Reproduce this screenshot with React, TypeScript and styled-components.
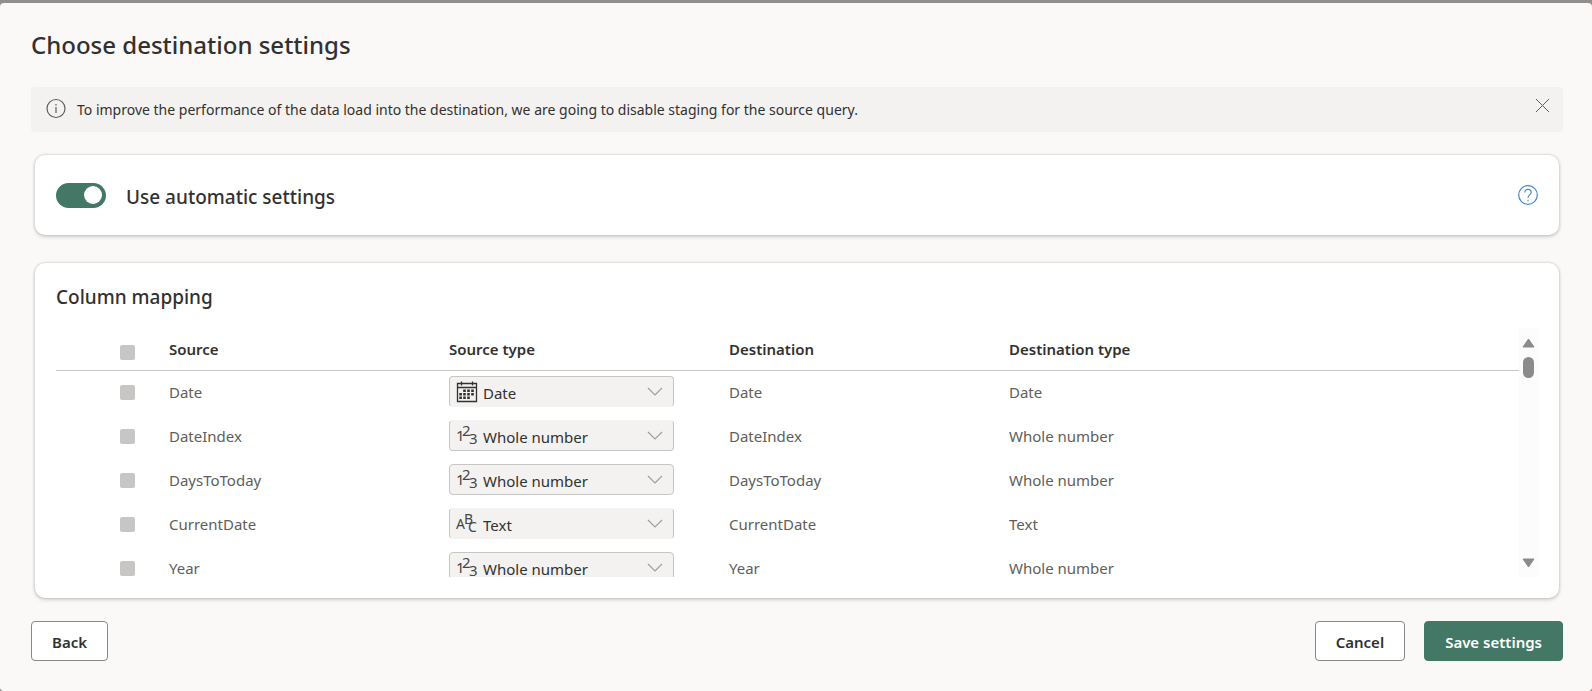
import React, { useState } from "react";
import styled, { createGlobalStyle, css } from "styled-components";

const GlobalStyle = createGlobalStyle`
  *, *::before, *::after { box-sizing: border-box; }
  body {
    margin: 0;
    background: #918e8b;
    color: #323130;
    font-family: "Segoe UI", "Noto Sans", "Open Sans", sans-serif;
    font-size: 15px;
    line-height: 20px;
  }
  button, select, input { font: inherit; color: inherit; }
`;

const Page = styled.div`
  min-height: 100vh;
  padding-top: 3px;
  display: flex;
`;

const Dialog = styled.main`
  flex: 1;
  min-width: 0;
  display: flex;
  flex-direction: column;
  padding: 26px 29px 30px 31px;
  background: #faf9f8;
  border-radius: 4px;
`;

const Title = styled.h1`
  margin: 0;
  font-size: 24px;
  line-height: 32px;
  font-weight: 500;
`;

const MessageBar = styled.div`
  display: flex;
  align-items: flex-start;
  gap: 11px;
  margin-top: 26px;
  min-height: 45px;
  padding: 11px 13px 11px 15px;
  background: #f3f2f1;
  border-radius: 4px;
`;

const MessageText = styled.p`
  flex: 1;
  margin: 0;
  font-size: 14px;
  line-height: 23px;
`;

const IconButton = styled.button`
  display: flex;
  padding: 0;
  border: 0;
  background: none;
  cursor: pointer;
`;

const Card = styled.section`
  margin: 0 4px;
  padding: 0 21px;
  background: #fff;
  border-radius: 10px;
  box-shadow: 0 0 3px rgba(0, 0, 0, 0.22), 0 2px 4px rgba(0, 0, 0, 0.14);
`;

const AutoCard = styled(Card)`
  display: flex;
  align-items: center;
  gap: 20px;
  height: 80px;
  margin-top: 23px;
`;

const MappingCard = styled(Card)`
  margin-top: 28px;
  padding-top: 20px;
  padding-bottom: 21px;
`;

const Toggle = styled.input`
  appearance: none;
  display: flex;
  align-items: center;
  width: 50px;
  height: 25px;
  margin: 0;
  padding: 0 4px;
  border-radius: 13px;
  background: #437866;
  cursor: pointer;

  &::before {
    content: "";
    width: 18px;
    height: 18px;
    border-radius: 50%;
    background: #fff;
  }
  &:checked::before { margin-left: auto; }
  &:not(:checked) { background: #8a8886; }
`;

const ToggleLabel = styled.label`
  flex: 1;
  padding-top: 4px;
  font-size: 19px;
  line-height: 28px;
  font-weight: 500;
`;

const SectionTitle = styled.h2`
  margin: 0 0 17px;
  font-size: 19px;
  line-height: 28px;
  font-weight: 500;
`;

const ScrollFrame = styled.div`
  display: flex;
  height: 249px;
`;

const ScrollBody = styled.div`
  flex: 1;
  min-width: 0;
  overflow: hidden;
`;

const ScrollTrack = styled.div`
  display: flex;
  flex-direction: column;
  align-items: center;
  gap: 9px;
  width: 19px;
  padding: 10px 0 9px;
  background: #fcfcfc;
`;

const ScrollThumb = styled.div`
  width: 11px;
  height: 21px;
  margin-bottom: auto;
  border-radius: 6px;
  background: #8b8b8b;
`;

const Table = styled.table`
  width: 100%;
  table-layout: fixed;
  border-collapse: collapse;
`;

const Col = styled.col<{ $width?: number }>`
  ${(p) => p.$width && css`width: ${p.$width}px;`}
`;

const HeadCell = styled.th`
  height: 42px;
  padding: 0;
  border-bottom: 1px solid #c8c6c4;
  text-align: left;
  font-weight: 600;
  vertical-align: middle;
`;

const Cell = styled.td`
  height: 44px;
  padding: 0 0 1px;
  color: #605e5c;
  vertical-align: middle;
`;

const Tick = styled.input<{ $head?: boolean }>`
  appearance: none;
  display: block;
  width: 15px;
  height: 15px;
  margin: ${(p) => (p.$head ? 8 : 2)}px 0 0 64px;
  border-radius: 2px;
  background: #c8c6c4;
`;

const Picker = styled.div`
  position: relative;
  width: 225px;
  height: 31px;
`;

const PickerSelect = styled.select<{ $top: boolean; $bottom: boolean }>`
  appearance: none;
  width: 100%;
  height: 100%;
  padding: 2px 30px 0 33px;
  border: 1px solid #c8c6c4;
  ${(p) => !p.$top && css`border-top-color: #f3f2f1;`}
  ${(p) => !p.$bottom && css`border-bottom-color: #f3f2f1;`}
  border-radius: 4px;
  background: #f3f2f1;
  color: #323130;
`;

const PickerIcon = styled.svg`
  position: absolute;
  left: 7px;
  top: 5px;
  overflow: visible;
  pointer-events: none;
`;

const PickerChevron = styled.svg`
  position: absolute;
  right: 11px;
  top: 11px;
  pointer-events: none;
`;

const Footer = styled.footer`
  display: flex;
  gap: 19px;
  margin-top: 23px;
`;

const Button = styled.button<{ $primary?: boolean; $start?: boolean }>`
  height: 40px;
  padding: 2px 20px 0;
  border: 1px solid ${(p) => (p.$primary ? "#437866" : "#8a8886")};
  border-radius: 4px;
  background: ${(p) => (p.$primary ? "#437866" : "#fff")};
  color: ${(p) => (p.$primary ? "#fff" : "#323130")};
  font-weight: 600;
  cursor: pointer;
  ${(p) => p.$start && css`margin-right: auto;`}
`;

type Kind = "Date" | "Whole number" | "Text";

interface Mapping {
  name: string;
  kind: Kind;
  top: boolean;
  bottom: boolean;
}

const mappings: Mapping[] = [
  { name: "Date", kind: "Date", top: true, bottom: false },
  { name: "DateIndex", kind: "Whole number", top: false, bottom: true },
  { name: "DaysToToday", kind: "Whole number", top: true, bottom: true },
  { name: "CurrentDate", kind: "Text", top: false, bottom: false },
  { name: "Year", kind: "Whole number", top: true, bottom: true },
];

const kinds: Kind[] = ["Date", "Whole number", "Text"];

function KindIcon({ kind }: { kind: Kind }) {
  if (kind === "Date") {
    return (
      <PickerIcon width="22" height="22" viewBox="0 0 22 22" aria-hidden="true">
        <path d="M1.500 2.500h19v18h-19zM1.500 6.500h19M5.500 0.500v4M16.500 0.500v4" fill="none" stroke="#323130" strokeWidth="1.300" />
        <path
          d="M7.200 8.500h2.600v2.400h-2.600zM11.200 8.500h2.600v2.400h-2.600zM15.200 8.500h2.600v2.400h-2.600zM3.300 12h2.600v2.400h-2.600zM7.200 12h2.600v2.400h-2.600zM11.200 12h2.600v2.400h-2.600zM15.200 12h2.600v2.400h-2.600zM3.300 15.600h2.600v2.400h-2.600zM7.200 15.600h2.600v2.400h-2.600zM11.200 15.600h2.600v2.400h-2.600z"
          fill="#323130"
        />
      </PickerIcon>
    );
  }
  const chars = kind === "Text" ? ["A", "B", "C"] : ["1", "2", "3"];
  const size = kind === "Text" ? 14 : 15;
  return (
    <PickerIcon width="22" height="22" viewBox="0 0 22 22" fontSize={size} fill="#484644" aria-hidden="true">
      <text x="0" y="16">{chars[0]}</text>
      <text x={kind === "Text" ? 8 : 6} y="11">{chars[1]}</text>
      <text x={kind === "Text" ? 12 : 13} y="19">{chars[2]}</text>
    </PickerIcon>
  );
}

function MappingRow({ row }: { row: Mapping }) {
  const [kind, setKind] = useState<Kind>(row.kind);
  return (
    <tr>
      <Cell>
        <Tick type="checkbox" disabled aria-label={`Include ${row.name}`} />
      </Cell>
      <Cell>{row.name}</Cell>
      <Cell>
        <Picker>
          <PickerSelect
            aria-label={`Source type of ${row.name}`}
            value={kind}
            onChange={(e) => setKind(e.target.value as Kind)}
            $top={row.top}
            $bottom={row.bottom}
          >
            {kinds.map((k) => (
              <option key={k}>{k}</option>
            ))}
          </PickerSelect>
          <KindIcon kind={kind} />
          <PickerChevron width="16" height="10" viewBox="0 0 16 10" aria-hidden="true">
            <path d="M1 1l7 7 7-7" fill="none" stroke="#a19f9d" strokeWidth="1.200" />
          </PickerChevron>
        </Picker>
      </Cell>
      <Cell>{row.name}</Cell>
      <Cell>{row.kind}</Cell>
    </tr>
  );
}

export default function App() {
  const [auto, setAuto] = useState(true);
  return (
    <>
      <GlobalStyle />
      <Page>
        <Dialog>
          <Title>Choose destination settings</Title>
          <MessageBar role="status">
            <svg width="20" height="21" viewBox="0 0 20 21" aria-hidden="true">
              <circle cx="10" cy="10.500" r="9" fill="none" stroke="#605e5c" strokeWidth="1.200" />
              <path d="M10 9v6M10 6v1.500" stroke="#605e5c" strokeWidth="1.200" />
            </svg>
            <MessageText>
              To improve the performance of the data load into the destination, we are going to disable staging for the
              source query.
            </MessageText>
            <IconButton type="button" aria-label="Dismiss">
              <svg width="15" height="15" viewBox="0 0 15 15" aria-hidden="true">
                <path d="M1 1l13 13M14 1L1 14" fill="none" stroke="#605e5c" />
              </svg>
            </IconButton>
          </MessageBar>
          <AutoCard>
            <Toggle id="auto" type="checkbox" role="switch" checked={auto} onChange={(e) => setAuto(e.target.checked)} />
            <ToggleLabel htmlFor="auto">Use automatic settings</ToggleLabel>
            <IconButton type="button" aria-label="Help">
              <svg width="20" height="20" viewBox="0 0 20 20" fill="none" stroke="#4a86cf" strokeWidth="1.200" aria-hidden="true">
                <circle cx="10" cy="10" r="9.300" />
                <path d="M6.800 7.500c0-2 1.400-3.200 3.200-3.200s3.200 1.100 3.200 2.900c0 2.600-3.200 2.800-3.200 5.800M10 14.700v1.600" />
              </svg>
            </IconButton>
          </AutoCard>
          <MappingCard>
            <SectionTitle>Column mapping</SectionTitle>
            <ScrollFrame>
              <ScrollBody>
                <Table>
                  <colgroup>
                    <Col $width={113} />
                    <Col $width={280} />
                    <Col $width={280} />
                    <Col $width={280} />
                    <Col />
                  </colgroup>
                  <thead>
                    <tr>
                      <HeadCell>
                        <Tick type="checkbox" disabled $head aria-label="Include all columns" />
                      </HeadCell>
                      <HeadCell>Source</HeadCell>
                      <HeadCell>Source type</HeadCell>
                      <HeadCell>Destination</HeadCell>
                      <HeadCell>Destination type</HeadCell>
                    </tr>
                  </thead>
                  <tbody>
                    {mappings.map((row) => (
                      <MappingRow key={row.name} row={row} />
                    ))}
                  </tbody>
                </Table>
              </ScrollBody>
              <ScrollTrack aria-hidden="true">
                <svg width="13" height="10" viewBox="0 0 13 10">
                  <path d="M6.500 1L12 9H1z" fill="#8b8b8b" stroke="#8b8b8b" strokeLinejoin="round" />
                </svg>
                <ScrollThumb />
                <svg width="13" height="10" viewBox="0 0 13 10">
                  <path d="M6.500 9L12 1H1z" fill="#8b8b8b" stroke="#8b8b8b" strokeLinejoin="round" />
                </svg>
              </ScrollTrack>
            </ScrollFrame>
          </MappingCard>
          <Footer>
            <Button type="button" $start>Back</Button>
            <Button type="button">Cancel</Button>
            <Button type="button" $primary>Save settings</Button>
          </Footer>
        </Dialog>
      </Page>
    </>
  );
}
